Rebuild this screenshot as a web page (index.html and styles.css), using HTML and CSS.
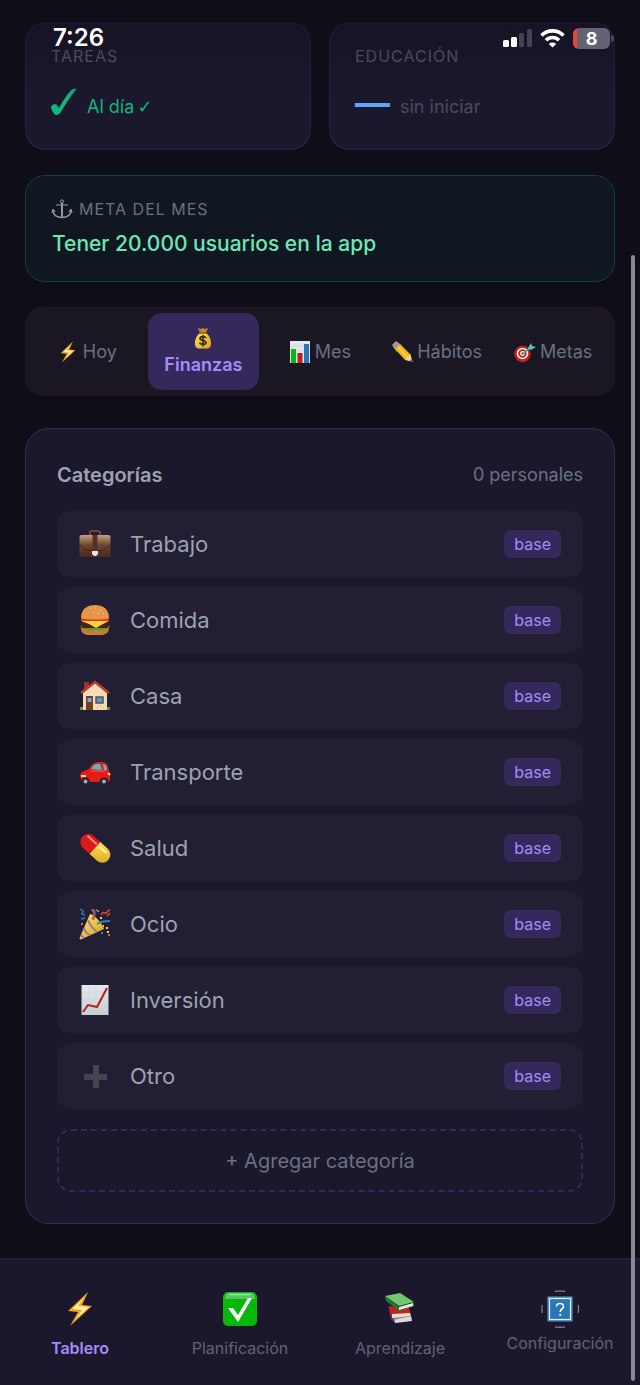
FILE: index.html
```html
<!DOCTYPE html>
<html lang="es">
<head>
    <meta charset="UTF-8">
    <meta name="viewport" content="width=device-width, initial-scale=1.0">
    <title>Tablero - Finanzas</title>
    <link rel="stylesheet" href="styles.css">
</head>
<body>

<!-- Shared icons -->
<svg class="sprite" aria-hidden="true">
    <defs>
        <linearGradient id="gold" x1="0" y1="0" x2="1" y2="1">
            <stop offset="0" stop-color="#ffe45c"/>
            <stop offset="1" stop-color="#d9a21b"/>
        </linearGradient>
        <linearGradient id="leather" x1="0" y1="0" x2="0" y2="1">
            <stop offset="0" stop-color="#c79a8b"/>
            <stop offset="0.3" stop-color="#8a6744"/>
            <stop offset="0.45" stop-color="#6d4633"/>
            <stop offset="1" stop-color="#4a281d"/>
        </linearGradient>
        <linearGradient id="paper" x1="0" y1="0" x2="0" y2="1">
            <stop offset="0" stop-color="#e3e8f1"/>
            <stop offset="1" stop-color="#c6cfcf"/>
        </linearGradient>
    </defs>
    <symbol id="bolt" viewBox="0 0 36 36">
        <path d="M26 1 6 20l10 1L8 35l22-20-10-1z" fill="#f5a51d"/>
        <path d="M22 7 10 18l10 1-6 9 13-12-11-1z" fill="#fff0a8"/>
    </symbol>
</svg>

<div class="status-bar">
    <span class="time">7:26</span>
    <div class="status-icons">
        <svg class="signal" viewBox="0 0 29 18" aria-hidden="true">
            <rect x="0" y="11" width="6" height="7" rx="1.5" fill="#fff"/>
            <rect x="8" y="8" width="6" height="10" rx="1.5" fill="#fff"/>
            <rect x="16" y="4" width="5" height="14" rx="1.5" fill="#444254"/>
            <rect x="24" y="0" width="5" height="18" rx="1.5" fill="#444254"/>
        </svg>
        <svg class="wifi" viewBox="0 0 25 18" aria-hidden="true">
            <path d="M1.500 6.500a15.500 15.500 0 0 1 22 0M6 11.200a9.300 9.300 0 0 1 13 0" fill="none" stroke="#fff" stroke-width="3.600"/>
            <path d="M12.500 18.500 8.800 14.900a5.500 5.500 0 0 1 7.400 0z" fill="#fff"/>
        </svg>
        <span class="battery">8</span>
    </div>
</div>

<main>
    <div class="stats">
        <div class="stat">
            <div class="label">TAREAS</div>
            <div class="value ok">
                <svg class="check" viewBox="0 0 26 28" aria-hidden="true">
                    <path d="M.3 20c-.8-3 4-5 6-2.500L8 20C12 13 16 6 20.500 2c1.500-1.500 5.500-1.800 4.700-.5C19.500 8 14 17 9.500 24.500 8 27.500 3.500 27.800 2.500 25 1.600 23.500.7 22 .3 20z" fill="#12b57c"/>
                </svg>
                <span>Al día <span class="tick">✓</span></span>
            </div>
        </div>
        <div class="stat">
            <div class="label">EDUCACIÓN</div>
            <div class="value idle">
                <span class="dash">—</span>
                <span>sin iniciar</span>
            </div>
        </div>
    </div>

    <div class="goal">
        <div class="label">
            <svg class="anchor" viewBox="0 0 20 20" aria-hidden="true">
                <g fill="none" stroke="#9897a6">
                    <circle cx="10" cy="2.500" r="1.600" stroke-width="1"/>
                    <path d="M10 4v14" stroke-width="2"/>
                    <path d="M4 6h12" stroke-width="1"/>
                    <path d="M1 11c0 5 4 7.500 9 7.500s9-2.500 9-7.500" stroke-width="1.600"/>
                    <path d="M0 14l1-4 2.500 3M20 14l-1-4-2.500 3" stroke-width="1"/>
                </g>
            </svg>
            META DEL MES
        </div>
        <div class="goal-text">Tener 20.000 usuarios en la app</div>
    </div>

    <div class="tabs">
        <button class="tab" type="button">
            <svg viewBox="0 0 36 36" aria-hidden="true"><use href="#bolt"/></svg>Hoy
        </button>
        <button class="tab active" type="button">
            <svg viewBox="0 0 22 22" aria-hidden="true">
                <path d="M6 1l3 1 2-1 2 1 3-1-2 5H8z" fill="#c48a2c"/>
                <path d="M8 6h6c3 2 5.500 7 5 11-.4 3.500-2 4.500-4 4.500H7c-2 0-3.600-1-4-4.500C2.500 13 5 8 8 6z" fill="url(#gold)"/>
                <path d="M7.500 6h7" stroke="#8e5b14" stroke-width="1.500"/>
                <path d="M14 11c-1-2-6-2-6 .5s6 1.500 6 4-5 2.500-6.500.3M11 8v11.500" fill="none" stroke="#3b2c18" stroke-width="1.700"/>
            </svg>
            <span>Finanzas</span>
        </button>
        <button class="tab" type="button">
            <svg viewBox="0 0 22 22" aria-hidden="true">
                <path d="M1 0h20v22H1z" fill="#e1e7f0"/>
                <path d="M1 5h20M1 10h20M1 15h20" stroke="#c3cbd4" stroke-width=".5"/>
                <path d="M2 8h5v14H2z" fill="#08b912"/>
                <path d="M8.500 12h5v10h-5z" fill="#b81f1d"/>
                <path d="M15 3h5v19h-5z" fill="#2878b8"/>
            </svg>Mes
        </button>
        <button class="tab" type="button">
            <svg viewBox="0 0 22 22" aria-hidden="true">
                <path d="M1 4 5 0l4 3-5 5z" fill="#e58377"/>
                <path d="M6 1l5 4-5 6-4-5z" fill="#8b9bad"/>
                <path d="M9 3l11 11-6 5L4 8z" fill="#f3b51e"/>
                <path d="M7 6l10 10.500" stroke="#ffd650" stroke-width="1.500"/>
                <path d="M19 13l3 8-8-2z" fill="#f1d3a2"/>
                <path d="M20.500 18l1.500 3-3-.8z" fill="#4a3b33"/>
            </svg>Hábitos
        </button>
        <button class="tab" type="button">
            <svg viewBox="0 0 22 22" aria-hidden="true">
                <circle cx="8.500" cy="13" r="8.200" fill="#c91f1b"/>
                <circle cx="8.500" cy="12.500" r="5" fill="none" stroke="#fff" stroke-width="1.600"/>
                <circle cx="8.500" cy="12.500" r="1.800" fill="none" stroke="#fff" stroke-width="1.300"/>
                <path d="M9 13l9-8" stroke="#3fae9b" stroke-width="2"/>
                <path d="M14 7l3-5 1 3 4 1-5 3z" fill="#58bfc1"/>
            </svg>Metas
        </button>
    </div>

    <section class="panel">
        <div class="panel-head">
            <h2>Categorías</h2>
            <span class="count">0 personales</span>
        </div>
        <ul class="categories">
            <li>
                <svg viewBox="0 0 32 32" aria-hidden="true">
                    <path d="M11 7V4.500Q11 3 12.500 3h7Q21 3 21 4.500V7" fill="none" stroke="#80553b" stroke-width="1.500"/>
                    <rect x=".5" y="7" width="31" height="22" rx="2" fill="url(#leather)"/>
                    <path d="M1 17c4 5 10 6 15 6s11-1 15-6" fill="none" stroke="#3e2219" stroke-width="1"/>
                    <path d="M13.500 7h5v16h-5z" fill="#533322"/>
                    <path d="M13 23h6v3l-2 2h-2l-2-2z" fill="#e5e7ec"/>
                </svg>
                <span class="name">Trabajo</span><span class="badge">base</span>
            </li>
            <li>
                <svg viewBox="0 0 32 32" aria-hidden="true">
                    <path d="M2 24h28c0 5-4 7-8 7H10c-5 0-8-2-8-7z" fill="#c97b35"/>
                    <path d="M1 22c5-3 25-3 30 0-2 4-4 3-7 4-3 1-6-1-9 0s-6 0-9-1-4-1-5-3z" fill="#46a52b"/>
                    <rect x="2" y="18" width="28" height="6" rx="3" fill="#49231a"/>
                    <path d="M2 17h28l-6 3-7 4-7-4z" fill="#ffd23b"/>
                    <path d="M2 14h28v3H2z" fill="#dc3c25"/>
                    <path d="M2 14C2 5 8 1 16 1s14 4 14 13c-5 2-23 2-28 0z" fill="#e69549"/>
                    <path d="M11 5h1M16 4h1M21 6h1M14 8h1M19 9h1M24 10h1" stroke="#ffd68d" stroke-width="1.200"/>
                </svg>
                <span class="name">Comida</span><span class="badge">base</span>
            </li>
            <li>
                <svg viewBox="0 0 32 32" aria-hidden="true">
                    <path d="M5 2h5v8H5z" fill="#9b342b"/>
                    <path d="M4 13 16 3l12 10v17H4z" fill="#f2ddb7"/>
                    <path d="M2 13 16 2l14 11" fill="none" stroke="#c43832" stroke-width="2.500"/>
                    <path d="M7 16h7v14H7z" fill="#6d4129"/>
                    <path d="M8.500 18h4v4h-4z" fill="#67aee6"/>
                    <path d="M17 17h7v6h-7z" fill="#4e9bdd" stroke="#6b4c42" stroke-width="1.500"/>
                    <path d="M18 27h1M21 26h1M24 28h1" stroke="#c8946a"/>
                    <path d="M1 27h3v3H1zM28 27h3v3h-3z" fill="#708e48"/>
                </svg>
                <span class="name">Casa</span><span class="badge">base</span>
            </li>
            <li>
                <svg viewBox="0 0 32 32" aria-hidden="true">
                    <path d="M1 20c0-4 4-5 9-7 3-5 5-7 11-7 6 0 8 2 9 9l1 4v5l-2 2H3z" fill="#e21d19"/>
                    <path d="M12 13c2-4 4-5 7-5h2l2 6zM24 8c3 0 4 3 4 6h-3z" fill="#57b9bd"/>
                    <path d="M2 20h5M29 17l2 2" stroke="#ffdb8d" stroke-width="2"/>
                    <path d="M12 15h15" stroke="#ff735c" stroke-width=".8"/>
                    <circle cx="6.500" cy="25.500" r="4" fill="#25252b"/>
                    <circle cx="25" cy="25.500" r="4" fill="#25252b"/>
                    <circle cx="6.500" cy="25.500" r="2" fill="#a5a8b3"/>
                    <circle cx="25" cy="25.500" r="2" fill="#a5a8b3"/>
                </svg>
                <span class="name">Transporte</span><span class="badge">base</span>
            </li>
            <li>
                <svg viewBox="0 0 32 32" aria-hidden="true">
                    <g transform="rotate(42 16 16)">
                        <path d="M16 8H6a8 8 0 0 0-8 8 8 8 0 0 0 8 8h10z" fill="#d91c1b" transform="translate(1)"/>
                        <path d="M16 8h10a8 8 0 0 1 0 16H16z" fill="url(#gold)"/>
                        <path d="M3 12h11" stroke="#ff8a7e" stroke-width="2" stroke-linecap="round"/>
                        <path d="M19 12h8" stroke="#fff4a2" stroke-width="2" stroke-linecap="round"/>
                    </g>
                </svg>
                <span class="name">Salud</span><span class="badge">base</span>
            </li>
            <li>
                <svg viewBox="0 0 32 32" aria-hidden="true">
                    <path d="M11 6c4 0 13 10 14 15L3 31c-2 1-3 0-2-2z" fill="url(#gold)"/>
                    <path d="M9 12c2 5 5 9 9 12M5 20c1 4 3 6 6 7M2 27l3 3" fill="none" stroke="#8f72c7" stroke-width="2"/>
                    <path d="M13 11c3-2 4-7 1-10M18 16c4-3 8-3 13-3" fill="none" stroke="#2a82d2" stroke-width="1.800"/>
                    <path d="M12 2c2 0 3 2 3 5s-1 3 0 5M23 7c-1-2 1-3 3-2s2-3 5-3M31 5l-3 3" fill="none" stroke="#d94a3b" stroke-width="1.500"/>
                    <path d="M1 1l3 2-1 3 3 1M2 11l4-1" fill="none" stroke="#3477c4" stroke-width="1.500"/>
                    <path d="M21 10h2M27 20h2M28 24h2M24 18h1" stroke="#ffd44c" stroke-width="2"/>
                    <path d="M2 16h2M18 3h2M29 27h2" stroke="#dc6945" stroke-width="2"/>
                    <path d="M22 25h2M17 2h1" stroke="#3a7bd7" stroke-width="2"/>
                </svg>
                <span class="name">Ocio</span><span class="badge">base</span>
            </li>
            <li>
                <svg viewBox="0 0 32 32" aria-hidden="true">
                    <path d="M2.500 1h27v30h-27z" fill="url(#paper)"/>
                    <path d="M3 8h26M3 15h26M3 22h26M10 1v30M17 1v30M24 1v30" stroke="#c6cfdb" stroke-width=".4"/>
                    <path d="M4 28l5-7 9 2L28 4" fill="none" stroke="#b7201e" stroke-width="2"/>
                </svg>
                <span class="name">Inversión</span><span class="badge">base</span>
            </li>
            <li>
                <svg viewBox="0 0 32 32" aria-hidden="true">
                    <path d="M14 5h6v9h8v6h-8v8h-6v-8H5v-6h9z" fill="#46444f"/>
                </svg>
                <span class="name">Otro</span><span class="badge">base</span>
            </li>
        </ul>
        <button class="add-category" type="button">+ Agregar categoría</button>
    </section>
</main>

<nav class="bottom-nav">
    <a href="#tablero" class="active">
        <svg viewBox="0 0 36 36" aria-hidden="true"><use href="#bolt"/></svg>
        Tablero
    </a>
    <a href="#planificacion">
        <svg viewBox="0 0 36 36" aria-hidden="true">
            <rect x="1" y="1" width="34" height="34" rx="5" fill="#07b80c"/>
            <path d="M3 8c0-4 1-6 5-6h20c4 0 5 2 5 6z" fill="#59c75e"/>
            <path d="M7 3.500h22" stroke="#7de8ae" stroke-width="1.500"/>
            <path d="M6 17h5l5 7L26 7h4L16 31z" fill="#fff"/>
        </svg>
        Planificación
    </a>
    <a href="#aprendizaje">
        <svg viewBox="0 0 36 36" aria-hidden="true">
            <path d="M4 13l3 5 2 11 4 3 17-2v-4L13 25z" fill="#3d3577"/>
            <path d="M12 27l17-2 1 5-17 2z" fill="#dadbe1"/>
            <path d="M11 27l18-4v2l-17 4z" fill="#a8884d"/>
            <path d="M7 15l20 2 2 6-19 3-2-4z" fill="#c91d18"/>
            <path d="M10 23l18-1v3l-18 2z" fill="#e7e3dc"/>
            <path d="M3 5l14 11 15-4v3l-15 5L4 10z" fill="#197b39"/>
            <path d="M17 16l14-4v3l-14 4z" fill="#e6e9e7"/>
            <path d="M3 5l15-3 14 9-15 4z" fill="#71c66f"/>
        </svg>
        Aprendizaje
    </a>
    <a href="#configuracion" class="compact">
        <svg viewBox="0 0 36 36" aria-hidden="true">
            <path d="M13 .3q5-.6 10 0M13 36q5 .6 10 0M.2 14q-.6 4 0 8M36.200 14q.6 4 0 8" fill="none" stroke="#aaa9b4" stroke-width=".9"/>
            <rect x="6" y="6" width="24" height="24" fill="#2977b5" stroke="#5a9bd2" stroke-width="1"/>
            <rect x="7.500" y="7.500" width="21" height="21" fill="none" stroke="#e4edf6" stroke-width="1.200"/>
            <path d="M14.500 15.500c0-4 7-4 7 0 0 2.500-3.300 2.500-3.300 5.500" fill="none" stroke="#fff" stroke-width="1.600"/>
            <circle cx="18.200" cy="23.800" r="1.100" fill="#fff"/>
        </svg>
        Configuración
    </a>
</nav>

<div class="scroll-thumb"></div>

</body>
</html>
```
FILE: styles.css
```css
* {
    box-sizing: border-box;
}
body {
    margin: 0;
    min-height: 100vh;
    position: relative;
    display: flex;
    flex-direction: column;
    font-family: Inter, "Liberation Sans", sans-serif;
    font-size: 18px;
    color: #6b7080;
    background-color: #0f0d18;
}
button {
    font: inherit;
    color: inherit;
    border: none;
    background: none;
    cursor: pointer;
}
svg {
    flex: none;
    overflow: visible;
}
.sprite {
    position: absolute;
    width: 0;
    height: 0;
}

/* Status bar, laid over the scrolled page */
.status-bar {
    position: absolute;
    top: 0;
    left: 0;
    right: 0;
    height: 100px;
    padding: 28px 30px 0 53px;
    display: flex;
    justify-content: space-between;
    align-items: flex-start;
    background: linear-gradient(rgba(15, 13, 24, 0.6), rgba(15, 13, 24, 0));
    color: #fff;
}
.time {
    font-size: 24px;
    font-weight: 600;
    line-height: 20px;
}
.status-icons {
    display: flex;
    align-items: center;
    gap: 8px;
    height: 20px;
}
.signal {
    width: 29px;
    height: 18px;
}
.wifi {
    width: 25px;
    height: 18px;
}
.battery {
    position: relative;
    width: 37px;
    height: 21px;
    border-radius: 6px;
    background: linear-gradient(90deg, #f04438 4px, #646373 4px);
    font-size: 18px;
    font-weight: 700;
    line-height: 21px;
    text-align: center;
}
.battery::after {
    content: "";
    position: absolute;
    right: -4px;
    top: 7px;
    width: 3px;
    height: 7px;
    border-radius: 0 3px 3px 0;
    background-color: #4b495a;
}

main {
    flex: 1;
    padding: 22px 25px 34px;
}
.label {
    font-size: 16px;
    line-height: 16px;
    letter-spacing: 1px;
}

.stats {
    display: grid;
    grid-template-columns: 1fr 1fr;
    gap: 18px;
}
.stat {
    padding: 24px 24px 23px;
    border: 2px solid #221d3e;
    border-radius: 20px;
    background-color: #1b182e;
}
.stat .label {
    color: #62616f;
}
.value {
    display: flex;
    align-items: center;
    gap: 10px;
    height: 40px;
    margin-top: 21px;
}
.ok {
    color: #12b57c;
}
.idle {
    color: #4b4b5b;
}
.value > span {
    line-height: 40px;
    padding-top: 4px;
}
.value .dash {
    padding: 0 0 6px;
    font-size: 35px;
    font-weight: 700;
    color: #60a5fa;
}
.check {
    width: 26px;
    height: 28px;
    margin-bottom: 6px;
}
.tick {
    margin-left: -2px;
    font-family: "DejaVu Sans", sans-serif;
}

.goal {
    margin-top: 25px;
    padding: 21px 26px 22px;
    border: 1px solid #134039;
    border-radius: 20px;
    background-color: #101720;
}
.goal .label {
    display: flex;
    align-items: center;
    gap: 7px;
    line-height: 24px;
}
.anchor {
    width: 20px;
    height: 20px;
}
.goal-text {
    margin-top: 8px;
    font-size: 21px;
    font-weight: 500;
    line-height: 30px;
    color: #6ee7b7;
}

.tabs {
    display: grid;
    grid-template-columns: repeat(5, 1fr);
    gap: 5px;
    margin-top: 25px;
    padding: 6px;
    border-radius: 18px;
    background-color: #1a1722;
}
.tab {
    display: flex;
    align-items: center;
    justify-content: center;
    gap: 4px;
    height: 77px;
    padding: 0;
    border-radius: 14px;
    line-height: 24px;
}
.tab svg {
    width: 22px;
    height: 22px;
}
.tab.active {
    flex-direction: column;
    background-color: #35285a;
    color: #a78bfa;
    font-weight: 600;
}

.panel {
    margin-top: 32px;
    padding: 31px;
    border: 1px solid #353049;
    border-radius: 24px;
    background-color: #1b182e;
}
.panel-head {
    display: flex;
    justify-content: space-between;
    align-items: center;
    line-height: 30px;
}
.panel-head h2 {
    margin: 0;
    font-size: 20px;
    font-weight: 600;
    color: #9ca3af;
}
.categories {
    display: flex;
    flex-direction: column;
    gap: 10px;
    margin: 21px 0 20px;
    padding: 0;
    list-style: none;
}
.categories li {
    display: flex;
    align-items: center;
    height: 66px;
    padding: 0 22px;
    border-radius: 14px;
    background-color: #221e33;
}
.categories svg {
    width: 32px;
    height: 32px;
    margin-right: 19px;
}
.name {
    flex: 1;
    font-size: 22px;
    color: #9ca3af;
}
.badge {
    padding: 0 10px;
    border-radius: 6px;
    background-color: #35285a;
    color: #a78bfa;
    font-size: 16px;
    line-height: 28px;
}
.add-category {
    display: block;
    width: 100%;
    height: 63px;
    border: 2px dashed #35285a;
    border-radius: 14px;
    font-size: 20px;
}

.bottom-nav {
    display: grid;
    grid-template-columns: repeat(4, 1fr);
    padding: 31px 0 27px;
    border-top: 2px solid #221c3f;
    background-color: #1b182e;
}
.bottom-nav a {
    display: flex;
    flex-direction: column;
    align-items: center;
    gap: 11px;
    color: #62636f;
    font-size: 16px;
    line-height: 20px;
    text-decoration: none;
}
.bottom-nav a.compact {
    gap: 6px;
}
.bottom-nav a.active {
    color: #a78bfa;
    font-weight: 600;
}
.bottom-nav svg {
    width: 36px;
    height: 36px;
}

/* Overlay scrollbar */
.scroll-thumb {
    position: absolute;
    top: 255px;
    right: 5px;
    bottom: 4px;
    width: 4px;
    border-radius: 2px;
    background-color: #8b8a92;
}
```
